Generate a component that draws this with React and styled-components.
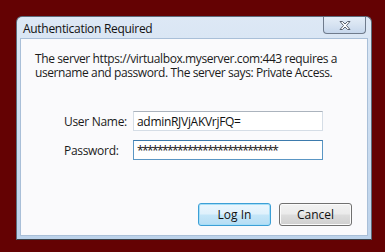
import React from 'react';
import styled, { createGlobalStyle } from 'styled-components';

const GlobalStyle = createGlobalStyle`
  html, body {
    margin: 0;
    padding: 0;
    background: #640203;
  }
  body {
    font-family: "Open Sans", "Noto Sans", "Liberation Sans", sans-serif;
    font-size: 12px;
    color: #1b1b1b;
  }
`;

const Page = styled.div`
  width: 385px;
  height: 252px;
  box-sizing: border-box;
  padding: 16px 0 0 16px;
`;

const Window = styled.div`
  width: 356px;
  height: 224px;
  box-sizing: border-box;
  border: 1px solid #5d6b7b;
  border-bottom-color: #3a3f46;
  border-radius: 6px 6px 0 0;
  background: linear-gradient(to bottom, #dde8f5 0%, #cfdff1 40%, #bcd2ea 100%);
  padding: 0 3px 3px 3px;
  display: flex;
  flex-direction: column;
`;

const TitleBar = styled.div`
  height: 21px;
  display: flex;
  align-items: flex-start;
  justify-content: space-between;
`;

const Title = styled.span`
  padding: 3px 0 0 3px;
  font-size: 12px;
  letter-spacing: -0.3px;
  color: #111;
`;

const CloseButton = styled.button`
  width: 43px;
  height: 17px;
  margin: 0 2px 0 0;
  padding: 0;
  border: 1px solid #6f7b8c;
  border-top: none;
  border-radius: 0 0 4px 4px;
  background: linear-gradient(to bottom, #e4edf7 0%, #d7e3f1 50%, #c6d7ec 100%);
  display: flex;
  align-items: center;
  justify-content: center;
`;

const Panel = styled.div`
  flex: 1;
  border: 1px solid #a9bfd8;
  background: #fafafc;
  padding: 13px 14px 9px 14px;
  display: flex;
  flex-direction: column;
`;

const Message = styled.p`
  margin: 0;
  line-height: 14px;
  letter-spacing: -0.4px;
  white-space: nowrap;
`;

const Form = styled.div`
  margin: 31px 0 0 29px;
  display: grid;
  grid-template-columns: 69px 190px;
  row-gap: 9px;
  align-items: center;
`;

const Label = styled.label`
  letter-spacing: -0.3px;
`;

const Field = styled.input`
  box-sizing: border-box;
  width: 190px;
  height: 20px;
  margin: 0;
  padding: 0 3px;
  font: inherit;
  font-size: 12px;
  letter-spacing: ${p => (p.$secret ? '-1.6px' : '-0.3px')};
  color: #111;
  background: #fff;
  outline: none;
  border: 1px solid ${p => (p.$focused ? '#5a96c4' : '#d5dde6')};
  border-top-color: ${p => (p.$focused ? '#3d7bad' : '#abb3bd')};
`;

const Buttons = styled.div`
  margin-top: auto;
  display: flex;
  justify-content: flex-end;
  gap: 8px;
  padding-right: 1px;
`;

const Button = styled.button`
  box-sizing: border-box;
  width: 73px;
  height: 23px;
  padding: 0;
  font: inherit;
  font-size: 12px;
  color: #111;
  border-radius: 3px;
  border: 1px solid ${p => (p.$default ? '#3c9fd6' : '#707070')};
  box-shadow: inset 0 0 0 1px ${p => (p.$default ? '#a5def7' : '#fbfbfb')};
  background: ${p =>
    p.$default
      ? 'linear-gradient(to bottom, #ebf6fd 0%, #dff1fc 48%, #c5e6f8 52%, #b5ddf4 100%)'
      : 'linear-gradient(to bottom, #f2f2f2 0%, #ebebeb 48%, #dddddd 52%, #cfcfcf 100%)'};
`;

const CloseIcon = () => (
  <svg width="14" height="11" viewBox="0 0 14 11">
    <path
      d="M2 1.5 L4.5 1.5 L7 4 L9.5 1.5 L12 1.5 L8.5 5.5 L12 9.5 L9.5 9.5 L7 7 L4.5 9.5 L2 9.5 L5.5 5.5 Z"
      fill="#ffffff"
      stroke="#5a6270"
      strokeWidth="1"
      strokeLinejoin="round"
    />
  </svg>
);

export default function App() {
  return (
    <Page>
      <GlobalStyle />
      <Window>
        <TitleBar>
          <Title>Authentication Required</Title>
          <CloseButton aria-label="Close">
            <CloseIcon />
          </CloseButton>
        </TitleBar>
        <Panel>
          <Message>
            The server https://virtualbox.myserver.com:443 requires a
            <br />
            username and password. The server says: Private Access.
          </Message>
          <Form>
            <Label>User Name:</Label>
            <Field readOnly value="adminRJVjAKVrjFQ=" />
            <Label>Password:</Label>
            <Field readOnly $focused $secret value="****************************" />
          </Form>
          <Buttons>
            <Button $default>Log In</Button>
            <Button>Cancel</Button>
          </Buttons>
        </Panel>
      </Window>
    </Page>
  );
}
